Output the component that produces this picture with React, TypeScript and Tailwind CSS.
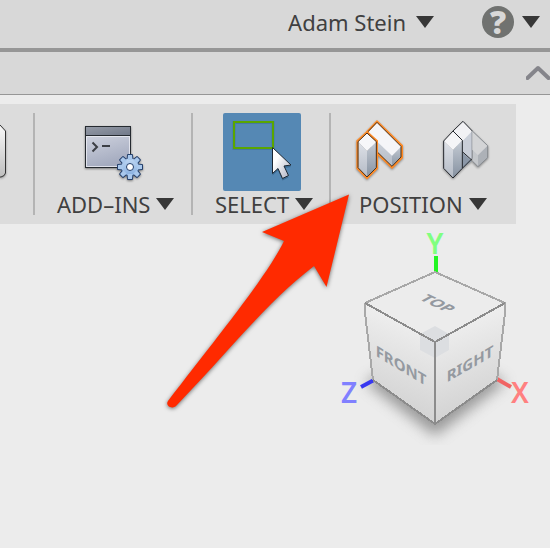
import type { ReactNode } from "react";

function Caret() {
  return (
    <svg width="18" height="12" viewBox="0 0 18 12" className="shrink-0" aria-hidden="true">
      <path d="M0 0H18L9 12Z" fill="#373737" />
    </svg>
  );
}

function Divider() {
  return <div className="w-0.5 shrink-0 bg-[#b4b4b4]" />;
}

function MenuLabel({ children }: { children: ReactNode }) {
  return (
    <button type="button" className="flex h-6 items-center gap-1.5 whitespace-nowrap text-[22px] leading-6">
      {children}
      <Caret />
    </button>
  );
}

function ClippedIcon() {
  return (
    <svg width="10" height="60" viewBox="0 0 10 60" aria-hidden="true" className="drop-shadow-[0_1px_1px_rgba(0,0,0,0.35)]">
      <defs>
        <linearGradient id="part" x1="0" y1="0" x2="0" y2="1">
          <stop offset="0" stopColor="#f8f8f8" />
          <stop offset="1" stopColor="#bfbfbf" />
        </linearGradient>
      </defs>
      <path d="M-4 3H0L5.500 9V51Q5 54 1 55H-4Z" fill="url(#part)" stroke="#333" />
    </svg>
  );
}

function AddInsIcon() {
  return (
    <svg width="68" height="64" viewBox="0 0 68 64" aria-hidden="true" className="drop-shadow-[0_1px_1px_rgba(0,0,0,0.45)]">
      <defs>
        <linearGradient id="screen" x1="0" y1="0" x2="0.3" y2="1">
          <stop offset="0" stopColor="#d9dce6" />
          <stop offset="1" stopColor="#a4abbf" />
        </linearGradient>
        <linearGradient id="titlebar" x1="0" y1="0" x2="1" y2="1">
          <stop offset="0" stopColor="#949aa6" />
          <stop offset="1" stopColor="#707888" />
        </linearGradient>
        <linearGradient id="gear" x1="0" y1="0" x2="0" y2="1">
          <stop offset="0" stopColor="#c0d8f3" />
          <stop offset="1" stopColor="#87afe0" />
        </linearGradient>
      </defs>
      <rect x="5.500" y="5.500" width="45" height="41" fill="url(#screen)" stroke="#252a30" />
      <rect x="6.500" y="15.500" width="43" height="30" fill="none" stroke="#eceef4" opacity="0.8" />
      <rect x="6" y="6" width="44" height="9" fill="url(#titlebar)" />
      <path d="M6 14.500H50" stroke="#252a30" />
      <path d="M12.500 21.500L17 26L12.500 30.500" fill="none" stroke="#3c3f45" strokeWidth="2" />
      <path d="M22 25H30" stroke="#3c3f45" strokeWidth="2" />
      <g transform="translate(50 46)">
        <g fill="#8fb5e4" stroke="#243f6b" strokeWidth="2" strokeLinejoin="round">
          <circle r="8" />
          <path id="tooth" d="M-2.500 -7L-2 -12H2L2.500 -7Z" />
          <use href="#tooth" transform="rotate(45)" />
          <use href="#tooth" transform="rotate(90)" />
          <use href="#tooth" transform="rotate(135)" />
          <use href="#tooth" transform="rotate(180)" />
          <use href="#tooth" transform="rotate(225)" />
          <use href="#tooth" transform="rotate(270)" />
          <use href="#tooth" transform="rotate(315)" />
        </g>
        <g fill="url(#gear)">
          <circle r="8.500" />
          <path id="tooth-fill" fill="#a9c8ec" d="M-2.500 -7L-2 -12H2L2.500 -7Z" />
          <use href="#tooth-fill" transform="rotate(45)" />
          <use href="#tooth-fill" transform="rotate(90)" />
          <use href="#tooth-fill" transform="rotate(135)" />
          <use href="#tooth-fill" transform="rotate(180)" />
          <use href="#tooth-fill" transform="rotate(225)" />
          <use href="#tooth-fill" transform="rotate(270)" />
          <use href="#tooth-fill" transform="rotate(315)" />
        </g>
        <circle r="3.500" fill="#fff" stroke="#243f6b" />
      </g>
    </svg>
  );
}

function SelectIcon() {
  return (
    <svg width="78" height="78" viewBox="0 0 78 78" aria-hidden="true">
      <defs>
        <linearGradient id="pointer" x1="0" y1="0" x2="1" y2="1">
          <stop offset="0.300" stopColor="#ffffff" />
          <stop offset="1" stopColor="#a9adbf" />
        </linearGradient>
      </defs>
      <rect x="11" y="9.500" width="39" height="26" fill="none" stroke="#3b6e98" strokeWidth="3" opacity="0.6" />
      <rect x="11" y="9" width="39" height="26" fill="none" stroke="#5aa600" strokeWidth="2" />
      <path d="M49.500 34.500V60.500L55 55.500L59.500 65.500L65.500 62.500L61 53L68 52Z" fill="#1f4f78" opacity="0.500" transform="translate(0 2)" />
      <path d="M49.500 34.500V60.500L55 55.500L59.500 65.500L65.500 62.500L61 53L68 52Z" fill="url(#pointer)" stroke="#1c2733" />
    </svg>
  );
}

function PrismGradients() {
  return (
    <svg width="0" height="0" className="absolute" aria-hidden="true">
      <defs>
        <linearGradient id="prism-light" x1="0" y1="0" x2="0" y2="1">
          <stop offset="0" stopColor="#dfe2e8" />
          <stop offset="1" stopColor="#b3bac5" />
        </linearGradient>
        <linearGradient id="prism-dark" x1="0" y1="0" x2="0" y2="1">
          <stop offset="0" stopColor="#c6ccd5" />
          <stop offset="1" stopColor="#8591a0" />
        </linearGradient>
      </defs>
    </svg>
  );
}

function CaptureIcon() {
  return (
    <svg width="56" height="68" viewBox="84 66 168 204" aria-hidden="true" className="drop-shadow-[0_1px_1px_rgba(0,0,0,0.4)]">
      <path d="M126 111L156 79L231 152V188L201 218L140 158Z" fill="url(#prism-light)" />
      <path d="M201 182L231 152V188L201 218Z" fill="url(#prism-dark)" />
      <path d="M126 111L156 79L231 152L201 182Z" fill="#f5f5f8" />
      <path d="M126 111L156 79L231 152V188L201 218L156 174" fill="none" stroke="#ff8a25" strokeWidth="6" />
      <path d="M126 113L156 82L228 154V186L201 214L158 172" fill="none" stroke="#47331f" strokeWidth="3" />
      <path d="M97 138L126 168V249L97 220Z" fill="url(#prism-light)" />
      <path d="M156 138L126 168V249L156 220Z" fill="url(#prism-dark)" />
      <path d="M126 111L156 138L126 168L97 138Z" fill="#f7f7f9" />
      <path d="M126 111L156 138V220L126 249L97 220V138Z" fill="none" stroke="#ff8a25" strokeWidth="6" />
      <path d="M126 114L154 140V218L126 246L99 218V140Z" fill="none" stroke="#47331f" strokeWidth="3" />
    </svg>
  );
}

function RevertIcon() {
  return (
    <svg width="56" height="68" viewBox="342 66 168 204" aria-hidden="true" className="drop-shadow-[0_1px_1px_rgba(0,0,0,0.4)]">
      <path d="M384 108L414 79L442 108V190L412 220Z" fill="url(#prism-dark)" />
      <path d="M414 137L442 108V190L414 218Z" fill="#c9ced8" />
      <path d="M412 172L440 198L412 220Z" fill="#8b97a7" />
      <path d="M384 108L414 79L442 108L414 137Z" fill="#f1f1f4" />
      <path d="M384 108L414 79L442 108V190L412 220M412 170L440 195" fill="none" stroke="#24272c" strokeWidth="3" />
      <path d="M442 108L488 152V188L459 215L442 198Z" fill="#c4c7cb" />
      <path d="M442 108L488 152L459 181L442 164Z" fill="#d3d4d6" />
      <path d="M459 181L488 152V188L459 215Z" fill="#adb1b7" />
      <path d="M442 108L488 152V188L459 215L442 198" fill="none" stroke="#85898e" strokeWidth="3" />
      <path d="M356 138L384 165V249L356 220Z" fill="url(#prism-light)" />
      <path d="M412 136L384 165V249L412 220Z" fill="url(#prism-dark)" />
      <path d="M384 108L412 136L384 165L356 138Z" fill="#f5f5f7" />
      <path d="M384 108L412 136V220L384 249L356 220V138Z" fill="none" stroke="#24272c" strokeWidth="3" />
    </svg>
  );
}

function ViewCube() {
  return (
    <svg width="210" height="220" viewBox="330 225 210 220" role="img" aria-label="View cube">
      <defs>
        <filter id="soft" x="-30%" y="-30%" width="160%" height="160%">
          <feGaussianBlur stdDeviation="7" />
        </filter>
        <linearGradient id="cube-left" x1="0.600" y1="0.150" x2="0.400" y2="1">
          <stop offset="0" stopColor="#eeeeee" />
          <stop offset="1" stopColor="#cecece" />
        </linearGradient>
        <linearGradient id="cube-right" x1="0.400" y1="0.150" x2="0.600" y2="1">
          <stop offset="0" stopColor="#eeeeee" />
          <stop offset="1" stopColor="#cecece" />
        </linearGradient>
      </defs>
      <path d="M365 382L435 345L506 382L435 436Z" fill="#777" opacity="0.700" filter="url(#soft)" />
      <path d="M436 256V272" stroke="#22f522" strokeWidth="4" />
      <path d="M361 387L374 380" stroke="#3838f0" strokeWidth="4" />
      <path d="M497 379L511 387" stroke="#f06464" strokeWidth="4" />
      <path d="M365 303L435 342V424L373 380Z" fill="url(#cube-left)" />
      <path d="M505 303L435 342V424L497 380Z" fill="url(#cube-right)" />
      <path d="M435 272L505 303L435 342L365 303Z" fill="#ececec" />
      <path d="M435 326L449 334V350L435 358L420 350V334Z" fill="#dcdee1" />
      <g fill="none" strokeWidth="2" shapeRendering="crispEdges">
        <path d="M365 303L435 272L505 303V313L497 380M373 380L365 313V303" stroke="#a8a8a8" />
        <path d="M365 303L435 342L505 303M373 380L435 424L497 380M435 342V424" stroke="#8c8c8c" />
      </g>
      <g fontFamily="'Noto Sans', sans-serif" fontWeight="700" fill="#9499a0" textAnchor="middle">
        <text transform="translate(401 371) skewY(31)" fontSize="15">FRONT</text>
        <text transform="translate(470 369) skewY(-30)" fontSize="15">RIGHT</text>
        <text transform="matrix(0.820 0.400 -0.750 0.400 433 306)" fontSize="18">TOP</text>
      </g>
      <g fontFamily="'Noto Sans', sans-serif" fontWeight="600" fontSize="28" textAnchor="middle">
        <text x="435" y="254" fill="#80ff80">Y</text>
        <text x="349" y="403" fill="#8080ff">Z</text>
        <text x="520" y="403" fill="#ff8080">X</text>
      </g>
    </svg>
  );
}

function PointerArrow() {
  return (
    <svg
      width="200"
      height="230"
      viewBox="160 190 200 230"
      aria-hidden="true"
      className="pointer-events-none absolute left-[160px] top-[190px] drop-shadow-[0_1px_2px_rgba(0,0,0,0.55)]"
    >
      <path
        d="M349 194.500L262 232L284 241C268 275 214 341 168 401C165 405 171 410 176 406C233 347 266 303 314 266L326.500 287Z"
        fill="#ff2a00"
      />
    </svg>
  );
}

export default function App() {
  return (
    <div className="relative min-h-screen overflow-hidden bg-[#ececec] font-['Noto_Sans',sans-serif] text-[#404040]">
      <PrismGradients />
      <header className="flex h-[52px] items-center justify-end gap-12 border-b-4 border-[#969696] bg-[#d8d8d8] pr-2.5">
        <button type="button" className="flex h-11 items-center gap-2.5 self-start text-[22px]">
          Adam Stein
          <Caret />
        </button>
        <button type="button" aria-label="Help" className="flex h-11 items-center gap-2 self-start">
          <span className="flex size-8 items-center justify-center rounded-full bg-[#707270] font-['Open_Sans',sans-serif] text-[32px] font-extrabold leading-8 text-[#d8d8d8]">
            ?
          </span>
          <Caret />
        </button>
      </header>
      <div className="flex h-[43px] items-center justify-end border-b border-[#969696] bg-[#d8d8d8]">
        <button type="button" aria-label="Collapse toolbar">
          <svg width="24" height="18" viewBox="0 0 24 18" aria-hidden="true">
            <path d="M1.500 14L12 4L22.500 14" fill="none" stroke="#85858b" strokeWidth="4" strokeLinecap="round" strokeLinejoin="round" />
          </svg>
        </button>
      </div>
      <main className="pt-[9px]">
        <div role="toolbar" className="mr-[34px] flex h-[120px] bg-[#dcdcdc] py-[9px]">
          <button type="button" aria-label="Tool" className="flex w-[33px] shrink-0 pt-[9px]">
            <ClippedIcon />
          </button>
          <Divider />
          <div className="flex w-[156px] shrink-0 flex-col items-start pl-[22px]">
            <button type="button" aria-label="Scripts and add-ins" className="ml-[23px] h-[79px] shrink-0">
              <AddInsIcon />
            </button>
            <MenuLabel>ADD–INS</MenuLabel>
          </div>
          <Divider />
          <div className="flex w-[136px] shrink-0 flex-col items-start pl-[22px]">
            <button type="button" aria-label="Select" className="mb-px ml-2 h-[78px] shrink-0 rounded-xs bg-[#5588b4]">
              <SelectIcon />
            </button>
            <MenuLabel>SELECT</MenuLabel>
          </div>
          <Divider />
          <div className="flex shrink-0 flex-col items-start pl-[22px]">
            <div className="flex h-[79px] shrink-0 gap-[30px]">
              <button type="button" aria-label="Capture position" className="pb-[3px]">
                <CaptureIcon />
              </button>
              <button type="button" aria-label="Revert position" className="pb-[3px]">
                <RevertIcon />
              </button>
            </div>
            <div className="pl-1.5">
              <MenuLabel>POSITION</MenuLabel>
            </div>
          </div>
        </div>
        <div className="flex justify-end pr-2.5 pt-px">
          <ViewCube />
        </div>
      </main>
      <PointerArrow />
    </div>
  );
}
